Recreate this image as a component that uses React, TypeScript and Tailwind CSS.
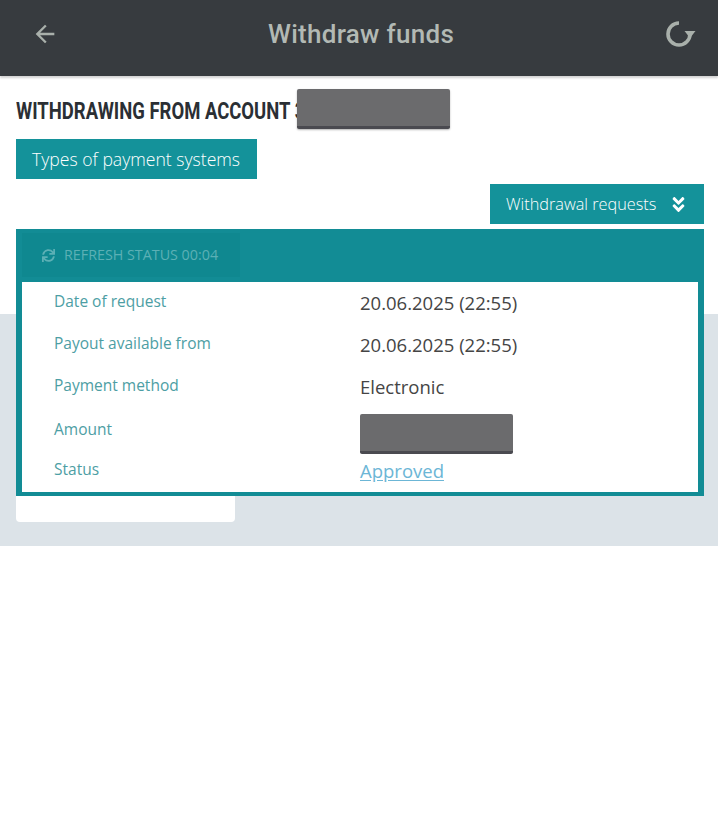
import React from "react";
import { MdArrowBack } from "react-icons/md";
import { FaSync, FaAngleDoubleDown } from "react-icons/fa";

const rows: { label: string; value: React.ReactNode }[] = [
  { label: "Date of request", value: "20.06.2025 (22:55)" },
  { label: "Payout available from", value: "20.06.2025 (22:55)" },
  { label: "Payment method", value: "Electronic" },
  {
    label: "Amount",
    value: (
      <div className="mt-[6px] h-[40px] w-[153px] rounded-[2px] bg-[#6b6b6d] border-b-[3px] border-[#4a4a50]" />
    ),
  },
  {
    label: "Status",
    value: <span className="text-[#6cb6d6] underline underline-offset-2">Approved</span>,
  },
];

export default function App() {
  return (
    <div className="w-[718px] min-h-[834px] bg-white" style={{ fontFamily: '"Open Sans", sans-serif' }}>
      <header className="relative h-[76px] bg-[#373b3f] flex items-center justify-between px-[31px] pb-[8px] shadow-[0_2px_2px_rgba(0,0,0,0.18)]">
        <MdArrowBack className="text-[#a9b0ab]" size={28} />
        <h1
          className="text-[26px] font-medium text-[#b2b9b4] tracking-[0.3px] pl-[2px]"
          style={{ fontFamily: "Roboto, sans-serif" }}
        >
          Withdraw funds
        </h1>
        <svg width="36" height="36" viewBox="0 0 36 36" className="-mr-[10px]">
          <path d="M18 7 A11 11 0 1 0 29 18" fill="none" stroke="#a9b0ab" strokeWidth="3.6" />
          <polygon points="23.5,15 34.5,15 29,22" fill="#a9b0ab" />
        </svg>
      </header>

      <div className="pl-[16px] pr-[14px] flex flex-col">
        <div className="mt-[13px] h-[40px] flex items-center">
          <h2
            className="text-[24px] font-bold text-[#2b2f34] uppercase whitespace-nowrap w-[281px] shrink-0"
            style={{ fontFamily: '"Roboto", sans-serif' }}
          >
            <span className="inline-block origin-left scale-x-[0.77] pt-[3px]">Withdrawing from account 3</span>
          </h2>
          <div className="relative z-10 h-[40px] w-[153px] rounded-[2px] bg-[#6b6b6d] border-b-[3px] border-[#4a4a50] shadow-[0_1px_2px_rgba(0,0,0,0.3)]" />
        </div>

        <div className="mt-[10px]">
          <button className="h-[40px] w-[241px] pl-[16px] text-left bg-[#14929a] text-white text-[17.6px] font-light">
            Types of payment systems
          </button>
        </div>

        <div className="mt-[5px] flex justify-end">
          <button className="h-[40px] w-[214px] pl-[16px] pr-[16px] bg-[#14929a] text-white text-[16.3px] font-light flex items-center justify-between">
            <span>Withdrawal requests</span>
            <FaAngleDoubleDown size={19} />
          </button>
        </div>

        <div className="relative mt-[5px]">
          <div className="absolute left-[-16px] right-[-14px] top-[85px] h-[232px] bg-[#dce3e8]">
            <div className="ml-[16px] w-[219px] h-[208px] bg-white rounded-b-[4px]" />
          </div>
          <div className="relative bg-[#128c95] pt-[4px] px-[6px] pb-[4px]">
            <div className="h-[44px] w-[218px] bg-[#0f8890] flex items-center pl-[20px] gap-[9px] text-[#5cb0b5] text-[14.3px] uppercase">
              <FaSync size={13} />
              <span>Refresh status 00:04</span>
            </div>
            <div className="mt-[5px] bg-white">
              {rows.map((r) => (
                <div key={r.label} className="grid grid-cols-[338px_1fr] h-[42px] items-center">
                  <div className="pl-[32px] text-[15.5px] text-[#4d9ea4] -mt-[3px]">{r.label}</div>
                  <div className="text-[18.5px] text-[#454545]">{r.value}</div>
                </div>
              ))}
            </div>
          </div>
        </div>
      </div>
    </div>
  );
}
